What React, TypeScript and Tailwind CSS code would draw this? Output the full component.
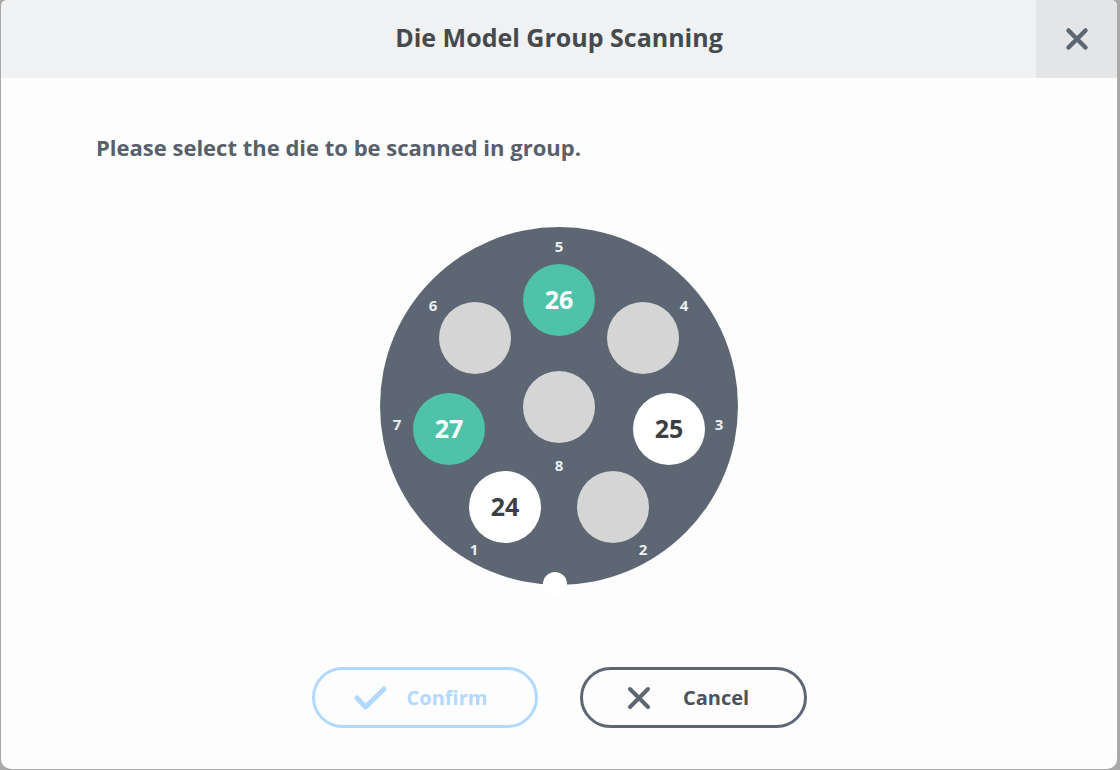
import { type ReactElement } from 'react';

type Hole = {
  id: number;
  left: number;
  top: number;
  value?: number;
  state: 'empty' | 'selected' | 'loaded';
};

// positions relative to the disc's top-left corner (disc is 358px across)
const holes: Hole[] = [
  { id: 5, left: 143, top: 37, value: 26, state: 'selected' },
  { id: 6, left: 59, top: 75, state: 'empty' },
  { id: 4, left: 227, top: 75, state: 'empty' },
  { id: 8, left: 143, top: 144, state: 'empty' },
  { id: 7, left: 33, top: 166, value: 27, state: 'selected' },
  { id: 3, left: 253, top: 166, value: 25, state: 'loaded' },
  { id: 1, left: 89, top: 244, value: 24, state: 'loaded' },
  { id: 2, left: 197, top: 244, state: 'empty' },
];

const labels = [
  { n: 5, x: 179, y: 19 },
  { n: 6, x: 53, y: 78 },
  { n: 4, x: 304, y: 78 },
  { n: 7, x: 17, y: 197 },
  { n: 3, x: 339, y: 197 },
  { n: 8, x: 179, y: 238 },
  { n: 1, x: 94, y: 322 },
  { n: 2, x: 263, y: 322 },
];

const holeClass = {
  empty: 'bg-[#d5d5d5] text-transparent',
  selected: 'bg-[#4fc3a9] text-white',
  loaded: 'bg-white text-[#3b3f44]',
};

function DieDisc(): ReactElement {
  return (
    <div className="relative h-[358px] w-[358px] rounded-full bg-[#5c6773]">
      {labels.map((l) => (
        <span
          key={l.n}
          className="absolute flex h-[20px] w-[20px] -translate-x-1/2 -translate-y-1/2 items-center justify-center text-[15px] font-bold text-[#eceef0]"
          style={{ left: l.x, top: l.y }}
        >
          {l.n}
        </span>
      ))}
      {holes.map((h) => (
        <button
          key={h.id}
          type="button"
          className={`absolute flex h-[72px] w-[72px] items-center justify-center rounded-full text-[25px] font-bold ${holeClass[h.state]}`}
          style={{ left: h.left, top: h.top }}
        >
          {h.value ?? ''}
        </button>
      ))}
      {/* locating notch */}
      <div className="absolute left-[163px] top-[345px] h-[24px] w-[24px] rounded-full bg-white" />
    </div>
  );
}

export default function App(): ReactElement {
  return (
    <div
      className="flex h-[770px] w-[1120px] bg-[#a9a9a9] pb-px pl-px pr-[3px]"
      style={{ fontFamily: '"Open Sans", "Noto Sans", sans-serif' }}
    >
      <div className="flex flex-1 flex-col overflow-hidden rounded-b-[10px] rounded-t-[6px] bg-[#fdfdfe]">
        <div className="flex h-[78px] shrink-0 bg-[#f0f1f2]">
          <div className="w-[81px]" />
          <h1 className="flex flex-1 items-center justify-center pb-[3px] text-[25px] font-bold text-[#464a4e]">
            Die Model Group Scanning
          </h1>
          <button
            type="button"
            className="flex w-[81px] items-center justify-center bg-[#e4e5e6] text-[#5c6773]"
          >
            <svg width="24" height="24" viewBox="0 0 24 24" fill="none" stroke="currentColor" strokeWidth="4.5" strokeLinecap="round">
              <path d="M3.5 3.5l17 17M20.5 3.5l-17 17" />
            </svg>
          </button>
        </div>

        <div className="flex flex-1 flex-col">
          <p className="pl-[95px] pt-[54px] text-[22px] font-bold leading-[30px] text-[#57606b]">
            Please select the die to be scanned in group.
          </p>

          <div className="mt-[65px] flex justify-center">
            <DieDisc />
          </div>

          <div className="mt-[82px] flex justify-center gap-[42px]">
            <button
              type="button"
              disabled
              className="flex h-[61px] w-[226px] items-center justify-center gap-[20px] rounded-full border-[3px] border-[#b3d8ff] pr-[8px] text-[20px] font-bold text-[#b3d8ff]"
            >
              <svg width="33" height="24" viewBox="0 0 33 24" fill="none" stroke="currentColor" strokeWidth="5" strokeLinecap="round" strokeLinejoin="round">
                <path d="M3 12l8.5 9L30 3" />
              </svg>
              Confirm
            </button>
            <button
              type="button"
              className="flex h-[61px] w-[227px] items-center justify-center gap-[32px] rounded-full border-[3px] border-[#5c6773] pr-[10px] text-[20px] font-bold text-[#4a525c]"
            >
              <svg width="24" height="24" viewBox="0 0 24 24" fill="none" stroke="#5c6773" strokeWidth="4" strokeLinecap="round">
                <path d="M3 3l18 18M21 3L3 21" />
              </svg>
              Cancel
            </button>
          </div>
        </div>
      </div>
    </div>
  );
}
